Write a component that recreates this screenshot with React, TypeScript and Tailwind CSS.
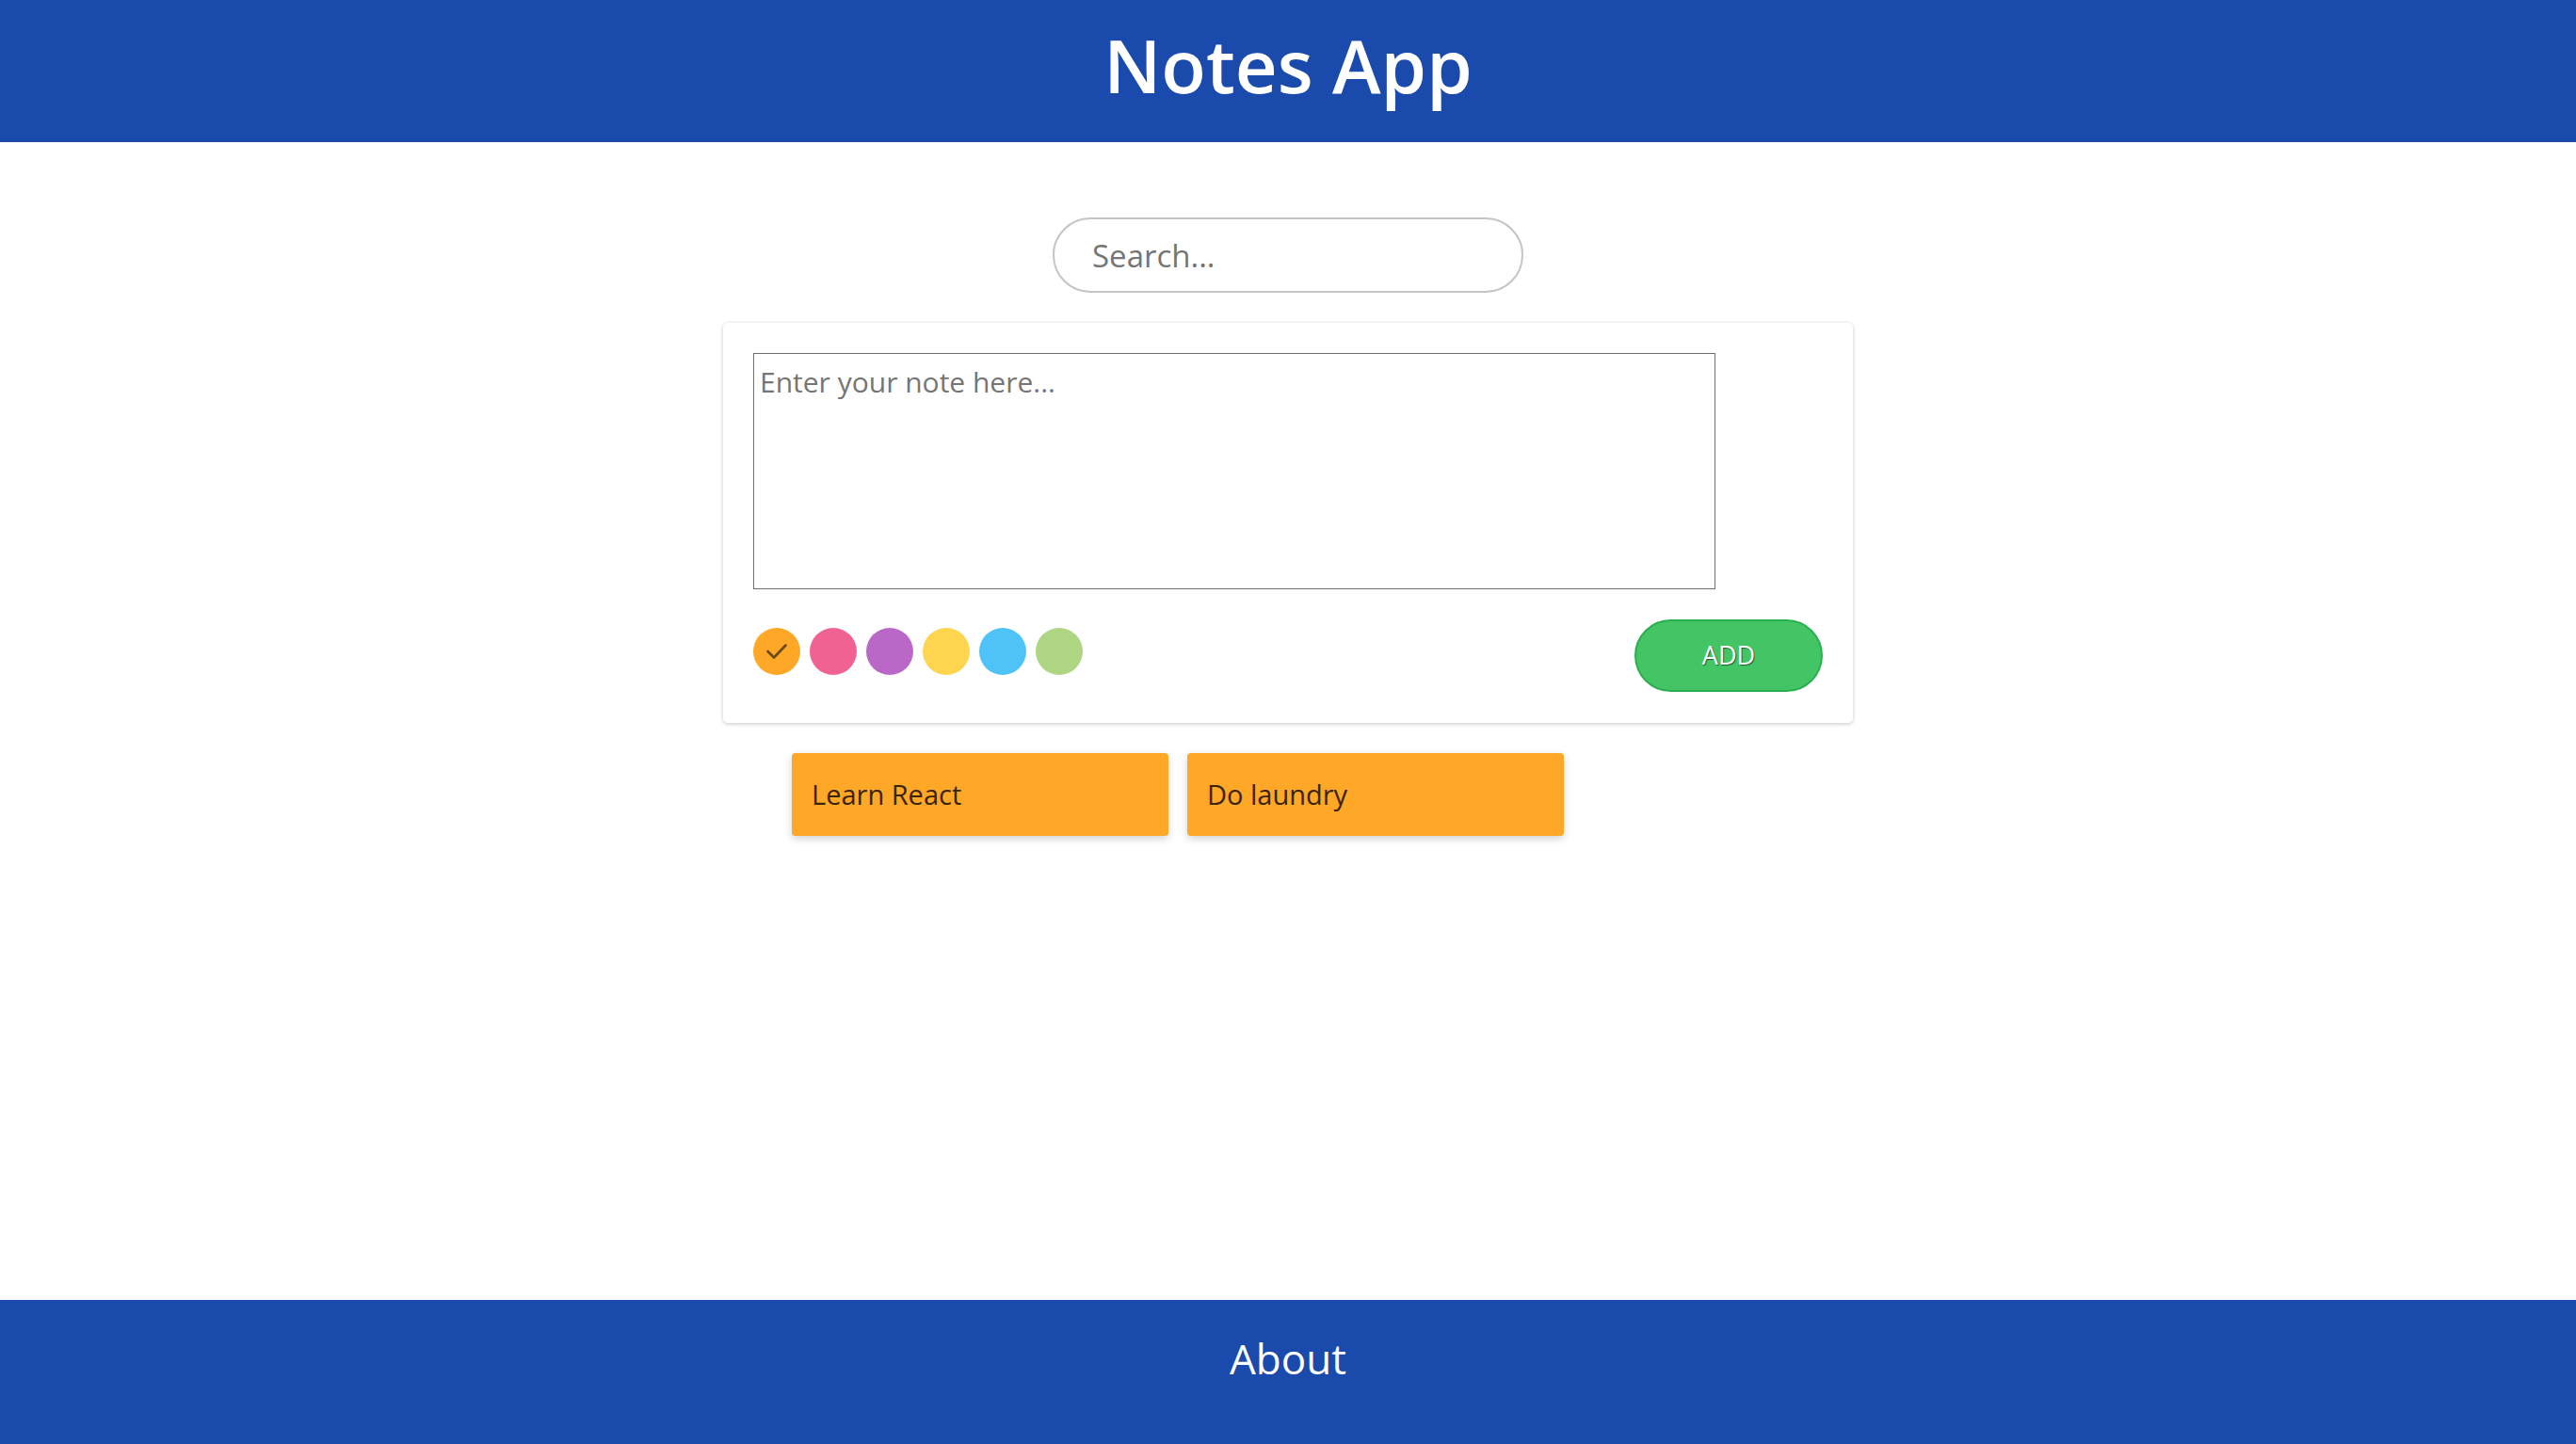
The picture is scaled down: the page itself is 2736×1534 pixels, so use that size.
import { useState } from "react";

const colors = ["#ffa726", "#f06292", "#ba68c8", "#ffd54f", "#4fc3f7", "#aed581"];

const initialNotes = [
  { id: 1, text: "Learn React", color: "#ffa726" },
  { id: 2, text: "Do laundry", color: "#ffa726" },
];

export default function App() {
  const [selected, setSelected] = useState(colors[0]);
  const [text, setText] = useState("");
  const [notes, setNotes] = useState(initialNotes);
  const [query, setQuery] = useState("");

  function addNote() {
    if (!text.trim()) return;
    setNotes([...notes, { id: Date.now(), text, color: selected }]);
    setText("");
  }

  const shown = notes.filter((n) => n.text.toLowerCase().includes(query.toLowerCase()));

  return (
    <div className="flex min-h-screen flex-col bg-white font-['Open_Sans',sans-serif]">
      <header className="flex h-[151px] items-center justify-center bg-[#1a4aab] pb-[14px]">
        <h1 className="text-[78px] font-semibold leading-none text-white">Notes App</h1>
      </header>

      <main className="flex flex-1 flex-col items-center">
        <input
          value={query}
          onChange={(e) => setQuery(e.target.value)}
          placeholder="Search..."
          className="mt-[80px] h-[80px] w-[500px] rounded-[40px] border-2 border-[#c4c4c4] px-[40px] text-[33px] text-gray-800 outline-none placeholder:text-[#757575]"
        />

        <div className="mt-[32px] w-[1200px] rounded-[5px] bg-white px-[32px] pt-[32px] pb-[33px] shadow-[0_1px_4px_rgba(0,0,0,0.22)]">
          <textarea
            value={text}
            onChange={(e) => setText(e.target.value)}
            placeholder="Enter your note here..."
            className="block h-[251px] w-[1022px] resize-none border-[1.5px] border-[#707070] px-[6px] pt-[10px] pb-[4px] text-[30px] leading-[1.35] text-gray-800 outline-none placeholder:text-[#757575]"
          />
          <div className="mt-[32px] flex items-start justify-between">
            <div className="mt-[9px] flex gap-[10px]">
              {colors.map((c) => (
                <button
                  key={c}
                  onClick={() => setSelected(c)}
                  className="flex h-[50px] w-[50px] items-center justify-center rounded-full"
                  style={{ backgroundColor: c }}
                >
                  {selected === c && (
                    <svg width="22" height="16" viewBox="0 0 22 16" fill="none">
                      <path d="M1.5 8l6.5 6.5L20.5 1.5" stroke="#6b4a12" strokeWidth="2.6" strokeLinecap="round" strokeLinejoin="round" />
                    </svg>
                  )}
                </button>
              ))}
            </div>
            <button
              onClick={addNote}
              className="flex h-[77px] w-[200px] items-center justify-center rounded-full border-2 border-[#2aae4f] bg-[#43c566] text-[27px] text-white [text-shadow:1px_1px_1px_rgba(0,0,0,0.55)]"
            >
              ADD
            </button>
          </div>
        </div>

        <div className="mt-[32px] flex w-[1200px] flex-wrap gap-[20px] pl-[73px]">
          {shown.map((n) => (
            <div
              key={n.id}
              className="flex h-[88px] w-[400px] items-center rounded-[4px] px-[21px] text-[29px] text-[#3a2408] shadow-[0_3px_8px_rgba(0,0,0,0.18)]"
              style={{ backgroundColor: n.color }}
            >
              {n.text}
            </div>
          ))}
        </div>
      </main>

      <footer className="flex h-[153px] items-center justify-center bg-[#1a4aab] pb-[30px]">
        <span className="text-[44px] text-white">About</span>
      </footer>
    </div>
  );
}
